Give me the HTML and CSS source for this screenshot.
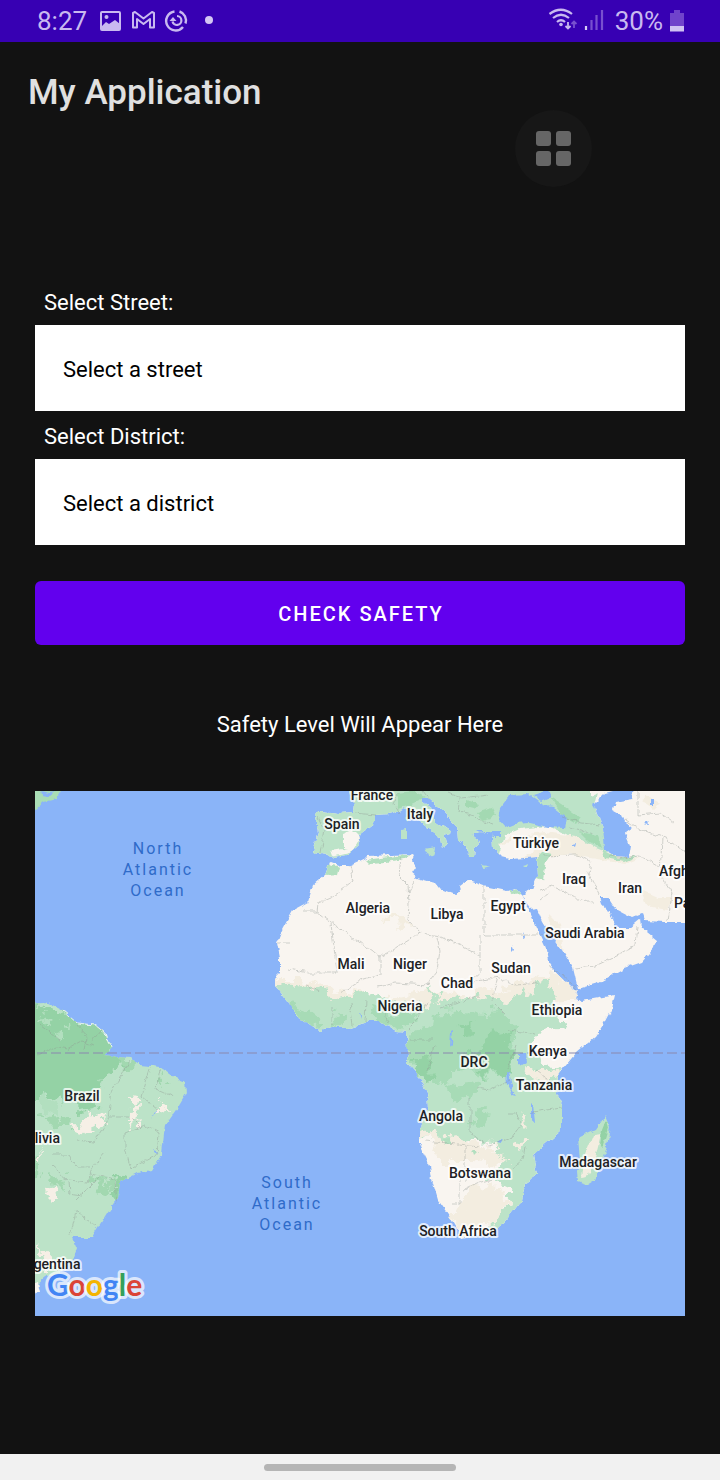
FILE: index.html
```html
<!DOCTYPE html>
<html lang="en">
<head>
<meta charset="utf-8">
<meta name="viewport" content="width=device-width, initial-scale=1">
<title>My Application</title>
<link rel="stylesheet" href="styles.css">
</head>
<body>
<div class="screen">
  <div class="status">
    <span class="clock">8:27</span>
    <svg class="notices" width="116" height="26" viewBox="99 8 116 26" aria-hidden="true">
      <rect x="101" y="12" width="19" height="18" rx="1" fill="none" stroke="#c9b9f0" stroke-width="2"/>
      <circle cx="106.500" cy="17" r="2" fill="#c9b9f0"/>
      <path d="M102 26l4-4 3 2 6-4 5 4v6h-18z" fill="#c9b9f0"/>
      <path d="M133 27.500V13l2-1 8.500 6.500L152 12l2 1v14.500h-4V19l-6.500 5L137 19v8.500z" fill="none" stroke="#c9b9f0" stroke-width="2" stroke-linejoin="round"/>
      <path d="M174.500 11.500A9.500 9.500 0 1 0 183 27M185.500 23.500A9.500 9.500 0 0 0 179.500 11.500" fill="none" stroke="#c9b9f0" stroke-width="2.400"/>
      <path d="M177 16a4.500 4.500 0 1 1-4.500 5.500" fill="none" stroke="#c9b9f0" stroke-width="2.200"/>
      <path d="M169.500 21l3.500-4 3.500 4z" fill="#c9b9f0"/>
      <circle cx="209" cy="20" r="4" fill="#d4c6f4"/>
    </svg>
    <svg class="signals" width="60" height="26" viewBox="547 8 60 26" aria-hidden="true">
      <g fill="none" stroke="#c9b9f0" stroke-width="2.200">
        <path d="M549.500 14q11.500-8.500 22.500 0M553 18q8-6.500 16 0M557 22q4-3.500 8 0"/>
        <path d="M568 22v6M565.500 26l2.500 2.500 2.500-2.500" stroke-width="1.800"/>
        <path d="M574 28v-6M571.500 24l2.500-2.500 2.500 2.500" stroke="#7850cf" stroke-width="1.800"/>
      </g>
      <circle cx="561" cy="24.500" r="1.800" fill="#c9b9f0"/>
      <path d="M586 26v4" stroke="#d8ccf5" stroke-width="2.200"/>
      <path d="M591.500 20v10M596.500 15v15M602 10v20" stroke="#7850cf" stroke-width="2.200"/>
    </svg>
    <span class="percent">30%</span>
    <svg class="battery" width="14" height="24" viewBox="0 0 14 24" aria-hidden="true">
      <path d="M4 1h6v3h4v14H0V4h4z" fill="#7043cb"/><path d="M0 17h14v5.500H0z" fill="#d0c2f3"/>
    </svg>
  </div>

  <header class="appbar"><h1 class="title">My Application</h1></header>

  <button class="floating" type="button" aria-label="Apps"><span class="dot"></span><span class="dot"></span><span class="dot"></span><span class="dot"></span></button>

  <main class="content">
    <label class="label" for="street">Select Street:</label>
    <select class="spinner" id="street"><option>Select a street</option></select>
    <label class="label" for="district">Select District:</label>
    <select class="spinner" id="district"><option>Select a district</option></select>
    <button class="check" type="button">CHECK SAFETY</button>
    <p class="result">Safety Level Will Appear Here</p>

    <svg class="map" viewBox="35 791 650 525" role="img" aria-label="Map of Africa and the Atlantic Ocean">
      <defs>
        <filter id="coast" filterUnits="userSpaceOnUse" x="25" y="781" width="670" height="545">
          <feTurbulence type="fractalNoise" baseFrequency="0.120" numOctaves="3" seed="4"/>
          <feDisplacementMap in="SourceGraphic" scale="6" xChannelSelector="R" yChannelSelector="G"/>
        </filter>
        <filter id="rough" filterUnits="userSpaceOnUse" x="25" y="781" width="670" height="545">
          <feTurbulence type="fractalNoise" baseFrequency="0.080" numOctaves="3" seed="9"/>
          <feDisplacementMap in="SourceGraphic" scale="22" xChannelSelector="R" yChannelSelector="G"/>
        </filter>
        <path id="africa" d="M330 862L341 866 350 866 365 859 368 856 392 855 412 854 415 856 412 862 415 867 411 873 417 878 435 883 439 888 455 894 460 892 459 886 467 880 483 886 507 891 515 888 521 894 528 908 537 928 545 945 548 960 557 973 572 987 577 992 575 998 582 1001 615 995 612 1008 603 1025 595 1037 577 1052 558 1075 557 1095 562 1105 562 1130 542 1147 533 1155 537 1175 525 1183 522 1200 508 1218 497 1230 462 1238 450 1217 438 1200 432 1180 430 1165 420 1145 420 1130 428 1107 427 1092 422 1080 407 1063 408 1050 407 1033 397 1032 380 1022 368 1022 348 1028 332 1028 320 1031 298 1017 290 1003 277 987 274 978 280 972 280 958 277 943 282 930 293 910 308 902 313 885 325 875Z"/>
        <path id="eurasia" d="M347 780L350 795 354 802 353 812 340 813 320 811 315 815 318 832 313 853 328 855 330 858 350 854 360 845 358 835 375 822 375 815 390 814 405 808 415 818 428 828 440 837 442 848 446 843 444 835 451 833 435 822 432 810 422 803 422 798 428 798 442 810 457 825 458 840 467 845 468 857 473 857 474 848 479 843 473 833 492 832 493 848 502 857 510 859 523 858 537 857 538 875 533 888 521 895 530 909 537 908 543 922 553 938 562 950 573 968 578 989 598 983 625 968 642 962 655 947 657 940 642 928 641 919 630 928 615 928 612 918 602 903 600 897 608 897 615 908 632 917 642 913 645 921 665 922 695 922 695 780Z"/>
        <path id="samerica" d="M25 1003L45 1002 62 1010 77 1023 95 1025 105 1033 110 1048 105 1055 117 1057 130 1058 140 1065 160 1067 173 1077 185 1082 186 1093 177 1108 165 1125 162 1153 152 1170 137 1173 120 1182 118 1197 107 1213 92 1237 72 1237 77 1248 73 1260 60 1272 45 1278 38 1284 25 1290Z"/>
        <path id="madagascar" d="M605 1115L610 1127 607 1147 595 1180 587 1185 578 1182 577 1170 580 1160 578 1138 595 1130Z"/>
        <clipPath id="africa-clip"><use href="#africa"/></clipPath>
        <clipPath id="eurasia-clip"><use href="#eurasia"/></clipPath>
        <clipPath id="samerica-clip"><use href="#samerica"/></clipPath>
      </defs>
      <rect x="35" y="791" width="650" height="525" fill="#8ab4f8"/>
      <g filter="url(#coast)">
        <use href="#africa" fill="#f9f5f0"/>
        <g clip-path="url(#africa-clip)">
          <g filter="url(#rough)">
            <path d="M265 978L300 978 340 990 390 996 430 990 470 996 510 985 550 975 580 985 575 1000 450 1012 360 1008 270 992Z" fill="#f3ede0"/>
            <path d="M265 984L305 982 335 998 372 992 400 1004 428 1002 470 996 510 1000 530 988 550 980 556 1012 566 1028 540 1032 528 1050 560 1075 580 1090 580 1150 545 1200 505 1235 490 1225 506 1208 512 1188 486 1178 504 1162 490 1144 450 1140 410 1134 400 1050 330 1045 280 1020Z" fill="#bce3c8"/>
            <path d="M430 985l8 14 6 10-5-2-12-18z" fill="#bce3c8"/>
            <path d="M422 1130L470 1144 500 1150 510 1165 475 1160 440 1160ZM470 1182l32 8 6 12-12 18-34 16-12-12 10-16z" fill="#f3ede0"/>
            <path d="M290 1003l24 10 10 12-12 2-20-14zM370 1008l34 4 18 6-20 12-26-8zM440 1012l44 2 18-4 16 18-8 38-10 12-38-8-18 14-16-8-24-18 4-26 22-4zM440 1086l46-4-8 12-22 6zM472 1112l22 2-10 12-12-2zM338 1012l10 4-6 12-10-2z" fill="#a7dbb6"/>
            <path d="M490 1034l20-2 2 40-18 4-20-8-6-12 16-8zM412 1056l18-2 2 26-10 2zM460 1024l12-2 4 12-12 4z" fill="#94d2a5"/>
            <path d="M530 1068l18 2 14 8-18 4-18-6zM524 1140l-8 4 2 6 6-4zM518 1112l8 10-4 4z" fill="#f3ede0"/>
            <path d="M376 918l30 2 6 6-18-2z" fill="#f3ede0"/>
          </g>
          <path d="M365 860L412 854 404 859 386 862 368 863ZM328 864l13 3-2 8-14 1zM508 890l14-3-2 7-6 1z" fill="#b2dfbf"/>
          <path d="M443 1139l7-1 2 5-8 1zM472 1150l6 2-4 4z" fill="#b2dfbf"/>
        </g>
        <use href="#madagascar" fill="#bce3c8"/>
        <path d="M593 1135l8-1-5 20-7 22-8 2 2-18z" fill="#f3ede0"/><path d="M606 1120l2 8-6 20-2-2 2-16z" fill="#94d2a5"/>

        <use href="#eurasia" fill="#f9f5f0"/>
        <g clip-path="url(#eurasia-clip)">
          <path d="M300 780H600L594 805 603 828 608 855 585 845 566 834 548 826 520 829 505 835 498 857 480 868 420 870 300 880Z" fill="#bce3c8"/>
          <path d="M499 844L512 836 545 832 575 836 596 848 606 852 640 858 625 864 590 858 570 854 530 859 515 858Z" fill="#f3ede0"/>
          <path d="M500 845l20-6 18 8-12 10-16 2zM343 834l10-4 8 8-7 12-11-2zM330 851l20-3 6 3-12 3-12 3zM590 780h14l-4 12-10 4z" fill="#f9f5f0"/>
          <path d="M537 858l6-6 8 2-5 8-3 18-6-2zM602 850l16 8 20-2-14 6-18-4z" fill="#b2dfbf"/>
          <path d="M398 793l16-2 12 6-18 8-10 4zM478 812l14-4 4 8-14 4zM466 800l12 4-4 5-8-2zM550 797l18 12 12 9-4 6-12-7zM580 832l18 4 4 12-12-6z" fill="#a3d9b2"/>
          <path d="M640 890l18 8 14 0-5 12-20-4zM548 913l12 12 4 26-10-12zM645 795l15 8-6 6-12-8zM577 841l8 2 4 12-8-4z" fill="#f3ede0"/>
          <path d="M498 820L500 808 510 795 528 794 537 800 542 805 553 807 567 818 565 828 548 827 530 823 515 824 505 828ZM533 795l15-5 3 7-10 4zM605 793L613 791 613 780H635L632 800 615 803 613 810 622 815 625 822 632 828 625 833 630 845 628 857 615 856 605 850 603 828 597 812 593 805Z" fill="#8ab4f8"/>
          <path d="M476 831h24v7h-12z" fill="#8ab4f8"/>
          <path d="M651 798l3 0 0 7-3 0zM644 824l4-3 1 4zM572 844l4-1-1 3z" fill="#8ab4f8"/>
        </g>
        <path d="M402 829l5-1v12l-5 0zM424 850l12-2-2 8zM481 865l8 1-6 2zM523 866l7-2-4 4z" fill="#bce3c8"/>
        <path d="M405 819l3-3v7zM30 785l31 6-5 8-12 3-9 8z" fill="#a9ddb5"/>
        <path d="M41 790l8 2 8-1-7 5-8-1z" fill="#8ab4f8"/>

        <use href="#samerica" fill="#bce3c8"/>
        <g clip-path="url(#samerica-clip)">
          <g filter="url(#rough)">
            <path d="M25 1000L80 1018 108 1030 112 1048 118 1060 132 1064 110 1070 102 1084 92 1100 100 1110 78 1112 65 1100 50 1098 25 1105Z" fill="#94d2a5"/>
            <path d="M48 1012l8 6-4 8-10-2zM54 1030l10-2 2 12-8 2zM35 1000l8 4-2 6zM40 1096l14 8 4 12-14-6z" fill="#b2dfbf"/>
            <path d="M40 1115l22 2 12 12-22-4zM48 1170l14 8 2 10-14-4zM94 1178l22 4-6 14-12-4zM118 1056l20 4-6 12-10-2zM160 1074l8 4-4 8-6-4zM36 1150l6 10-2 16-8-4z" fill="#a2d8b0"/>
            <path d="M68 1126l14-4 8-9 8 4 6-6 2 14-18 6zM130 1094l11 1-2 9-9-1zM132 1109l6-1-1 20-5-4zM160 1100l6 10-6 3zM48 1190l6-2 2 15-6 0zM37 1155l5-5-2 20zM38 1244l20 24-12 6z" fill="#f6efe6"/>
            <path d="M116 1176l12 2-8 20-6 2z" fill="#94d2a5"/>
          </g>
        </g>
        <path d="M62 1010L77 1023 95 1025 105 1033 110 1048" fill="none" stroke="#e6f2ee" stroke-width="1"/>
        <path d="M30 1284l8-2 2 10-10 4z" fill="#f9f5f0"/>
        <path d="M518 1054h8l1 8-5 3-4-2zM506 1072l3 1 4 18 4 5-4-1-6-11zM531 1102l2 2 2 18-4-2zM451 1032l2-1-1 13-2 3zM497 1142l6-4-2 5zM359 1013l2 1v5zM523 932l2 5-2 1zM512 945l2 6-2 2zM154 1111h2l-5 8zM153 1150l6 2-4 1z" fill="#8ab4f8"/>
        <path d="M522 896l4 6 3 8-2-2z" fill="#8ab4f8"/>
        <g class="borders">
          <path d="M317 912h-16M317 912L380 957 390 952 420 933 440 936 480 955M317 912L318 903 330 898 344 888 354 880 350 866M401 857L399 875 408 884 409 905 408 920 420 933M415 880l-6 12M484 886v49M484 935h58M480 935v38l-12 10M437 938l3 12-3 22-11 14M380 957v18l-20 6-20 12M331 923l6 50h-28l-20-4M378 987l18-4 32 2M290 943h-12M305 985l15 6M468 983l30-6 18 8 22-2M498 977l-6 24 14 14M427 1002l-8 16-12 12M440 1008l40-12M350 1003l3 22M366 1000l-1 22M332 1006v20M382 1008l6 16M410 1040h24M434 1045l-6 26M516 1045l-8 24M470 1098v35l18 12 24-8 10-14-6-10-8 0M425 1141l54 5M465 1146v36M460 1176v28h-8M465 1190l16-8 16-4M525 1146l-2 14-12 10M510 1080l-20 10-12-2M535 1070l24 16M562 1108l-30 4M509 1030l28 4M548 965l14 8 14 16"/>
          <path d="M318 817l6 12-4 24M354 813l22 2M398 793l-5 10 6 10M423 791l7 9M448 792l14 6 26-3M460 798l-2 14 16 4M475 818l18 6M543 856l34-1M577 855l14 6-2 12 10 22M540 890l12-4 34 16 8 0M540 900l10-8M575 968l20-2 26-12 14-8 2-20M609 856l18 2M638 815l22-2 14 10M638 815v-24M625 820l12 8 28 10 20 14M662 838l-2 36 12 20-4 26M620 858l20-2 24 14M562 817l20 6 18 2M570 828l24 6"/>
          <path d="M38 1055l18-8 12 2 14-8 14 4M76 1024l10 12-2 14M102 1030l-10 12M130 1062l-18 30-4 28-14 22-18-2M150 1068l-8 28 16 14M160 1069l-4 20 18 8M108 1117h22l12 12M125 1133l20-8 14 8-2 22-26 14-6-20zM106 1152l-14 16-4 14-20-2-16-14M68 1182l1 12 14 2M91 1174l24 6 2 24M74 1210l22 16M76 1212l-6 24M52 1155l18 0 8 12 12 0M76 1200l22-22M60 1040l-20-16"/>
        </g>
      </g>
      <path d="M37 1053H685" stroke="#8a88ae" stroke-width="1" stroke-dasharray="10 4"/>
      <g class="place">
        <text x="372" y="800">France</text><text x="342" y="829">Spain</text><text x="420" y="819">Italy</text>
        <text x="536" y="848">Türkiye</text><text x="574" y="884">Iraq</text><text x="630" y="893">Iran</text>
        <text x="368" y="913">Algeria</text><text x="447" y="919">Libya</text><text x="508" y="911">Egypt</text>
        <text x="585" y="938">Saudi Arabia</text><text x="351" y="969">Mali</text><text x="410" y="969">Niger</text>
        <text x="457" y="988">Chad</text><text x="511" y="973">Sudan</text><text x="400" y="1011">Nigeria</text>
        <text x="557" y="1015">Ethiopia</text><text x="548" y="1056">Kenya</text><text x="474" y="1067">DRC</text>
        <text x="544" y="1090">Tanzania</text><text x="441" y="1121">Angola</text><text x="480" y="1178">Botswana</text>
        <text x="598" y="1167">Madagascar</text><text x="458" y="1236">South Africa</text><text x="82" y="1101">Brazil</text>
        <text x="39" y="1143">Bolivia</text><text x="50" y="1269">Argentina</text>
        <text class="from-left" x="659" y="876">Afghanistan</text><text class="from-left" x="674" y="908">Pakistan</text>
      </g>
      <g class="ocean">
        <text x="158" y="854">North</text><text x="158" y="875">Atlantic</text><text x="158" y="896">Ocean</text>
        <text x="287" y="1188">South</text><text x="287" y="1209">Atlantic</text><text x="287" y="1230">Ocean</text>
      </g>
      <text class="brand" x="47" y="1296"><tspan fill="#4285f4">G</tspan><tspan fill="#db4437">o</tspan><tspan fill="#f4b400">o</tspan><tspan fill="#4285f4">g</tspan><tspan fill="#34a05a">l</tspan><tspan fill="#db4437">e</tspan></text>
    </svg>
  </main>
  <footer class="navigation"><span class="handle"></span></footer>
</div>
</body>
</html>
```
FILE: styles.css
```css
* { box-sizing: border-box; }
body { margin: 0; background: #121212; font-family: Roboto, "Liberation Sans", sans-serif; }
.screen { position: relative; display: flex; flex-direction: column; min-height: 100vh; }
.status { display: flex; align-items: center; height: 42px; padding: 0 36px 0 37px; background: #3700b3; color: #c9b9f0; font-size: 26px; line-height: 42px; }
.notices { margin-left: 12px; }
.signals { margin-left: auto; }
.percent { margin-left: 8px; }
.battery { margin-left: 7px; }
.appbar { display: flex; align-items: center; height: 100px; padding: 2px 28px 0; }
.title { margin: 0; color: #e0e0e0; font-size: 35px; font-weight: 500; line-height: 44px; }
.floating { position: absolute; top: 110px; right: 128px; display: grid; grid-template-columns: 15px 15px; gap: 5px; place-content: center; width: 77px; height: 77px; padding: 0; border: 0; border-radius: 50%; background: #171717; }
.dot { width: 15px; height: 15px; border-radius: 3px; background: #666; }
.content { display: flex; flex-direction: column; padding: 138px 35px; }
.label { height: 45px; padding-left: 9px; color: #fff; font-size: 22px; line-height: 46px; }
.spinner { height: 86px; margin: 0 0 3px; padding: 4px 28px 0; border: 0; border-radius: 0; appearance: none; background: #fff; color: #000; font: 22px/30px Roboto, "Liberation Sans", sans-serif; }
.check { height: 64px; margin-top: 33px; padding: 2px 0 0 2px; border: 0; border-radius: 6px; background: #6200ee; color: #fff; font: 500 20px/30px Roboto, "Liberation Sans", sans-serif; letter-spacing: 2px; }
.result { margin: 64px 0 51px; color: #fff; font-size: 22px; line-height: 31px; text-align: center; }
.map { display: block; width: 100%; height: auto; overflow: hidden; }
.borders { fill: none; stroke: #8e9691; stroke-width: 1px; stroke-opacity: 0.4; stroke-dasharray: 7 1; }
.place { fill: #202124; stroke: #fff; stroke-opacity: 0.75; stroke-width: 4px; stroke-linejoin: round; paint-order: stroke; font-size: 14px; font-weight: 500; text-anchor: middle; }
.from-left { text-anchor: start; }
.ocean { fill: #2f6bc9; font-size: 16px; letter-spacing: 2px; text-anchor: middle; }
.brand { font-family: Lato, sans-serif; font-size: 30px; font-weight: 700; stroke: #fff; stroke-opacity: 0.7; stroke-width: 6px; stroke-linejoin: round; paint-order: stroke; }
.navigation { display: flex; align-items: center; justify-content: center; height: 26px; margin-top: auto; background: #f1f1f1; }
.handle { width: 192px; height: 7px; border-radius: 4px; background: #b5b5b5; }
```
